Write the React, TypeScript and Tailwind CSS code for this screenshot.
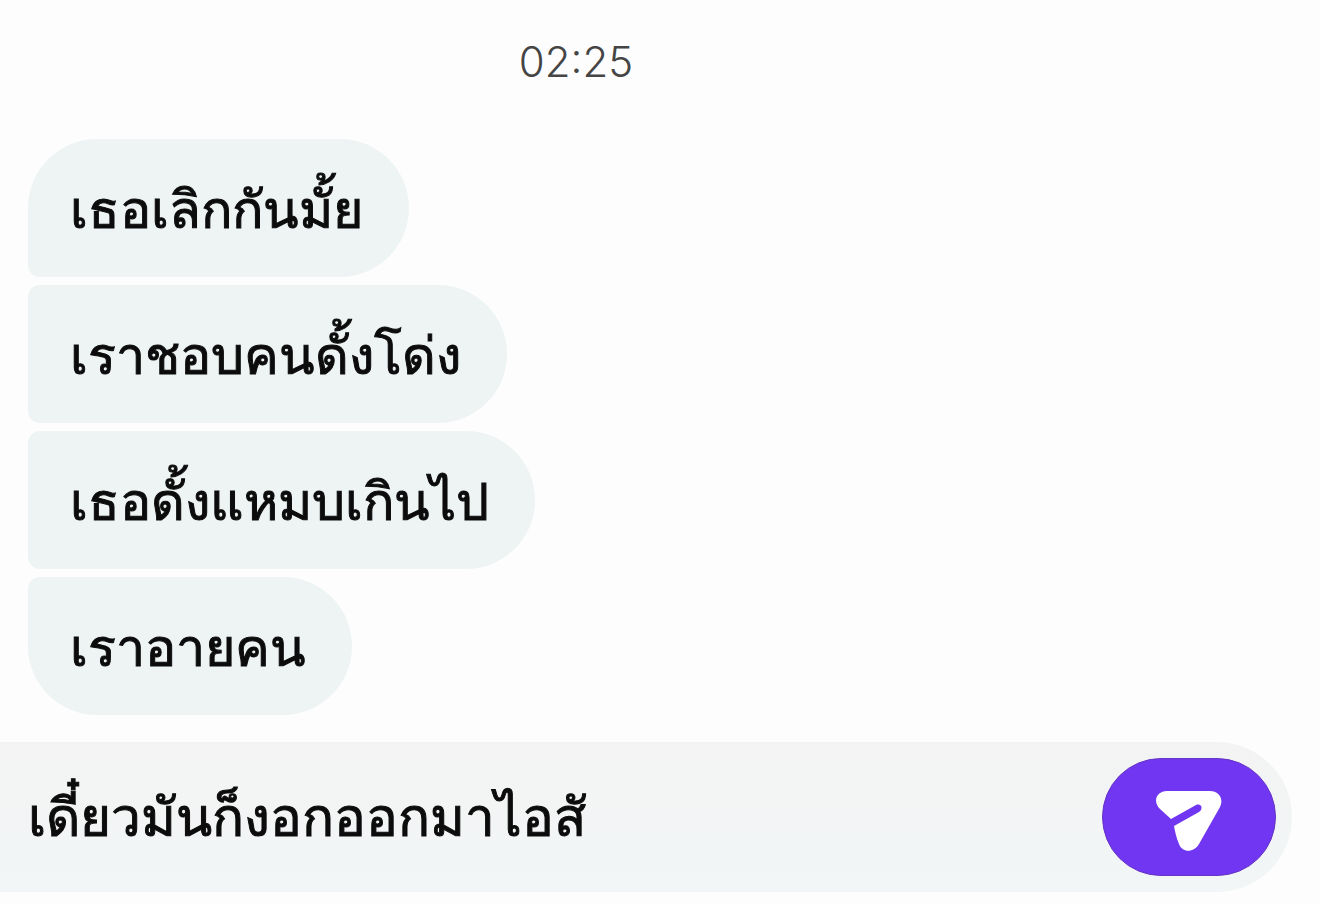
import React, { useState } from 'react';
import clsx from 'clsx';

interface Message {
  id: number;
  text: string;
}

const messages: Message[] = [
  { id: 1, text: 'เธอเลิกกันมั้ย' },
  { id: 2, text: 'เราชอบคนดั้งโด่ง' },
  { id: 3, text: 'เธอดั้งแหมบเกินไป' },
  { id: 4, text: 'เราอายคน' },
];

const SendIcon: React.FC = () => (
  <svg viewBox="0 0 66 60" className="h-[60px] w-[66px]" aria-hidden="true">
    <path
      d="M11 0H54C63 0 68 8 64 16L43 53C38 62 26 62 23 53C20 46 19 40 18 35L43 21C48 17 45 12 40 14L15 28L4 18C-4 10 1 0 11 0Z"
      fill="#fff"
    />
  </svg>
);

const MessageBubble: React.FC<{ text: string; first: boolean; last: boolean }> = ({ text, first, last }) => (
  <li
    className={clsx(
      'flex h-[138px] items-center rounded-r-[69px] bg-[#edf4f3] pt-1 pr-[46px] pl-[42px]',
      first ? 'rounded-tl-[69px]' : 'rounded-tl-xl',
      last ? 'rounded-bl-[69px]' : 'rounded-bl-xl'
    )}
  >
    {text}
  </li>
);

export default function App() {
  const [draft, setDraft] = useState('เดี๋ยวมันก็งอกออกมาไอสั');

  return (
    <div className="flex min-h-screen flex-col bg-[#fdfdfd] font-['Inter','Noto_Sans',sans-serif] text-[#0c0c0c]">
      <main className="flex-1 px-7">
        <time className="block pt-9 pr-[168px] text-center text-[42px] leading-[52px] font-light text-[#454545]">
          02:25
        </time>
        <ul className="mt-[51px] flex flex-col items-start gap-2 text-[52px] leading-[72px] font-medium [-webkit-text-stroke:1px]">
          {messages.map((message, index) => (
            <MessageBubble
              key={message.id}
              text={message.text}
              first={index === 0}
              last={index === messages.length - 1}
            />
          ))}
        </ul>
      </main>

      <form
        className="mr-7 mb-3 flex h-[150px] items-center rounded-r-[75px] bg-linear-to-b from-[#f3f3f3] to-[#f2f6f7] pr-4 pl-7"
        onSubmit={(e) => e.preventDefault()}
      >
        <input
          type="text"
          aria-label="ข้อความ"
          value={draft}
          onChange={(e) => setDraft(e.target.value)}
          className="h-full min-w-0 flex-1 bg-transparent text-[53px] font-medium outline-none [-webkit-text-stroke:1px]"
        />
        <button
          type="submit"
          aria-label="ส่ง"
          className="flex h-[118px] w-[174px] items-center justify-center rounded-[59px] border border-[#6434c4] bg-[#7136f1] pt-2"
        >
          <SendIcon />
        </button>
      </form>
    </div>
  );
}
